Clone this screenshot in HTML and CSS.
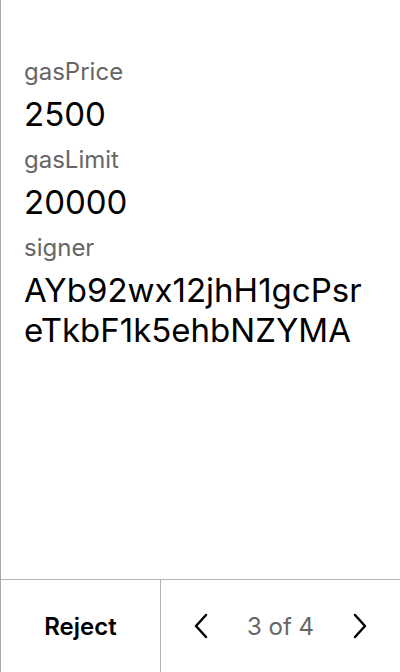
FILE: index.html
```html
<!DOCTYPE html>
<html>
<head>
<meta charset="utf-8">
<link rel="stylesheet" href="styles.css">
</head>
<body>
<div class="screen">
  <div class="content">
    <div class="field">
      <div class="label">gasPrice</div>
      <div class="value">2500</div>
    </div>
    <div class="field">
      <div class="label">gasLimit</div>
      <div class="value">20000</div>
    </div>
    <div class="field">
      <div class="label">signer</div>
      <div class="value">AYb92wx12jhH1gcPsreTkbF1k5ehbNZYMA</div>
    </div>
  </div>
  <div class="footer">
    <div class="reject">Reject</div>
    <div class="pager">
      <svg class="chev" width="20" height="28" viewBox="0 0 20 28"><path d="M15 3 L5 14 L15 25" fill="none" stroke="#000" stroke-width="2.5" stroke-linecap="round" stroke-linejoin="round"/></svg>
      <span class="count">3 of 4</span>
      <svg class="chev" width="20" height="28" viewBox="0 0 20 28"><path d="M5 3 L15 14 L5 25" fill="none" stroke="#000" stroke-width="2.5" stroke-linecap="round" stroke-linejoin="round"/></svg>
    </div>
  </div>
</div>
</body>
</html>
```

FILE: styles.css
```css
html, body { margin: 0; padding: 0; background: #fff; }
body { font-family: Inter, "Noto Sans", sans-serif; color: #000; }
.screen {
  width: 400px; height: 672px; box-sizing: border-box;
  border-left: 1px solid #a8a8a8;
  display: flex; flex-direction: column;
}
.content { flex: 1; padding: 56px 24px 0 23px; }
.field { margin-bottom: 10px; }
.label { font-size: 24px; line-height: 32px; color: #666; }
.value { font-size: 33px; line-height: 40px; margin-top: 6px; word-break: break-all; }
.footer {
  height: 92px; border-top: 1px solid #b4b4b4;
  display: flex;
}
.reject {
  width: 159px; border-right: 1px solid #b4b4b4;
  display: flex; align-items: center; justify-content: center;
  font-size: 24px; font-weight: 600;
}
.pager {
  flex: 1; display: flex; align-items: center; justify-content: space-between;
  padding: 0 30px;
}
.count { font-size: 24px; color: #666; }
.chev { display: block; }
```
